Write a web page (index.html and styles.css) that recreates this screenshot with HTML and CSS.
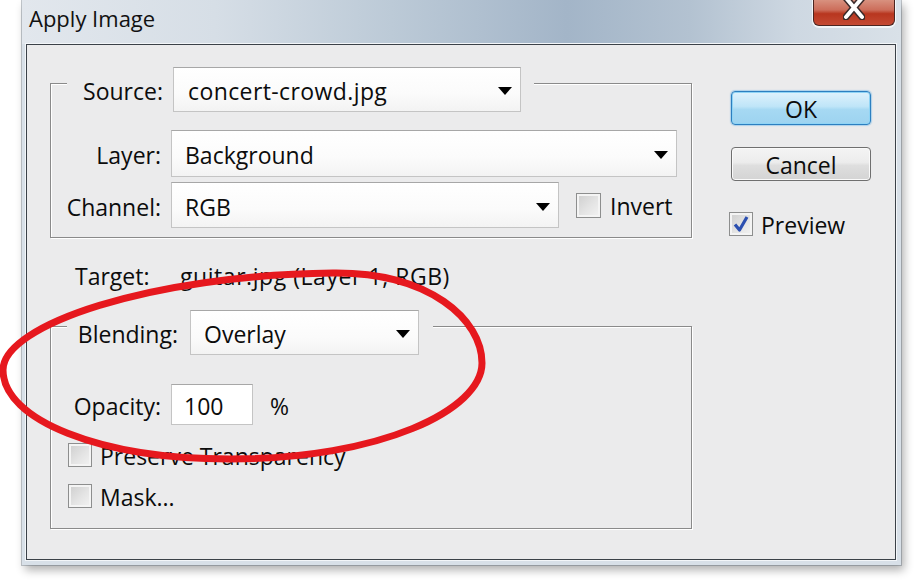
FILE: index.html
```html
<!DOCTYPE html>
<html>
<head>
<meta charset="utf-8">
<title>Apply Image</title>
<link rel="stylesheet" href="styles.css">
</head>
<body>
<div class="window">
  <div class="titlebar">
    <span class="title">Apply Image</span>
    <div class="close">
      <svg class="close-x" width="22" height="20" viewBox="0 0 22 20">
        <path d="M3 -2 L19 17 M19 -2 L3 17" stroke="#3a2a2a" stroke-width="7" stroke-linecap="round" fill="none"/>
        <path d="M3 -2 L19 17 M19 -2 L3 17" stroke="#ffffff" stroke-width="4" stroke-linecap="round" fill="none"/>
      </svg>
    </div>
  </div>
  <div class="client">
    <div class="main">
      <div class="group group-source">
        <div class="group-head">
          <span class="label head-label-source">Source:</span>
          <div class="select select-source"><span class="select-text">concert-crowd.jpg</span><span class="arrow"></span></div>
        </div>
        <div class="row row-layer">
          <span class="label">Layer:</span>
          <div class="select select-layer"><span class="select-text">Background</span><span class="arrow"></span></div>
        </div>
        <div class="row row-channel">
          <span class="label">Channel:</span>
          <div class="select select-channel"><span class="select-text">RGB</span><span class="arrow"></span></div>
          <div class="check check-invert"><span class="box"></span><span class="check-text">Invert</span></div>
        </div>
      </div>
      <div class="target">
        <span class="target-label">Target:</span><span class="target-value">guitar.jpg (Layer 1, RGB)</span>
      </div>
      <div class="group group-blend">
        <div class="group-head">
          <span class="label head-label-blend">Blending:</span>
          <div class="select select-blend"><span class="select-text">Overlay</span><span class="arrow"></span></div>
        </div>
        <div class="row row-opacity">
          <span class="label">Opacity:</span>
          <div class="input"><span class="select-text">100</span></div>
          <span class="pct">%</span>
        </div>
        <div class="checks">
          <div class="check"><span class="box"></span><span class="check-text">Preserve Transparency</span></div>
          <div class="check"><span class="box"></span><span class="check-text">Mask...</span></div>
        </div>
      </div>
    </div>
    <div class="side">
      <div class="btn btn-ok">OK</div>
      <div class="btn btn-cancel">Cancel</div>
      <div class="check check-preview">
        <span class="box">
          <svg class="tick" width="22" height="22" viewBox="0 0 22 22">
            <path d="M5 11.5 L9.5 17 L17 4" stroke="#2b4fb0" stroke-width="3.2" fill="none" stroke-linejoin="round"/>
          </svg>
        </span>
        <span class="check-text">Preview</span>
      </div>
    </div>
  </div>
</div>
<svg class="annotation" width="914" height="580" viewBox="0 0 914 580">
  <path d="M3 370 C3 325 150 275 333 273 C430 272 482 320 482 363 C482 410 380 459 230 459 C100 459 3 420 3 370 Z" fill="none" stroke="#e6181e" stroke-width="7"/>
</svg>
</body>
</html>
```

FILE: styles.css
```css
html, body {
  margin: 0;
  padding: 0;
}

body {
  width: 914px;
  height: 580px;
  overflow: hidden;
  position: relative;
  background: #ffffff;
  font-family: "Open Sans", "Noto Sans", sans-serif;
  font-size: 23px;
  color: #0c0c0c;
}

.window {
  margin-left: 22px;
  width: 879px;
  height: 565px;
  background: #d8e0e8;
  box-shadow: 0 0 0 1px rgba(80, 95, 110, 0.35), 3px 5px 9px rgba(0, 0, 0, 0.32);
  display: flex;
  flex-direction: column;
}

.titlebar {
  height: 44px;
  flex: none;
  display: flex;
  align-items: flex-start;
  padding-left: 7px;
  background: linear-gradient(to right, #e2e7ed 0%, #d6dee6 22%, #bccad7 42%, #a3b5c8 62%, #b3c2d1 76%, #ced8e2 88%, #d9e1e8 100%);
}

.title {
  font-size: 22px;
  line-height: 30px;
  padding-top: 3px;
  color: #111;
}

.close {
  margin-left: auto;
  margin-right: 6px;
  width: 82px;
  height: 26px;
  box-sizing: border-box;
  border: 1px solid #4b2520;
  border-top: none;
  border-radius: 0 0 6px 6px;
  background: linear-gradient(#d8917f 0%, #cc6d5a 40%, #b8361f 55%, #c44a33 100%);
  box-shadow: 0 1px 0 1px rgba(255, 255, 255, 0.7);
  display: flex;
  justify-content: center;
  align-items: flex-start;
}

.close-x {
  display: block;
}

.client {
  margin: 0 5px 0 4px;
  height: 516px;
  box-sizing: border-box;
  border: 1px solid #3b4148;
  background: #ebebec;
  box-shadow: 0 0 0 1px #f3f6f9;
  display: flex;
  align-items: flex-start;
}

.main {
  margin-left: 23px;
  padding-top: 38px;
  width: 642px;
}

.group {
  border: 1px solid #8a8a8a;
  box-shadow: 1px 1px 0 #ffffff, inset 1px 1px 0 #ffffff;
}

.group-head {
  display: flex;
  align-items: center;
  width: fit-content;
  margin: -17px 0 0 16px;
  background: #ebebec;
  height: 45px;
}

.group-source .group-head {
  padding-right: 13px;
}

.group-blend .group-head {
  padding-right: 14px;
}

.label {
  text-align: right;
  line-height: 30px;
  padding-top: 3px;
  white-space: nowrap;
}

.head-label-source {
  width: 96px;
  margin-right: 10px;
}

.head-label-blend {
  width: 111px;
  margin-right: 12px;
}

.row .label {
  width: 110px;
  margin-right: 10px;
}

.select,
.input {
  box-sizing: border-box;
  background: linear-gradient(#ffffff 0%, #fbfbfb 60%, #f3f3f3 100%);
  border: 1px solid #c4c4c4;
  border-top-color: #a7a7a7;
  display: flex;
  align-items: center;
  white-space: nowrap;
}

.select-text {
  line-height: 30px;
  padding-top: 3px;
}

.arrow {
  margin-left: auto;
  width: 0;
  height: 0;
  border-left: 7px solid transparent;
  border-right: 7px solid transparent;
  border-top: 8px solid #000;
  margin-right: 8px;
  margin-top: 3px;
}

.select-source {
  width: 348px;
  height: 45px;
  padding-left: 14px;
}

.select-source .select-text {
  letter-spacing: 0.4px;
}

.select-layer {
  width: 506px;
  height: 47px;
  padding-left: 13px;
}

.select-channel {
  width: 388px;
  height: 46px;
  padding-left: 13px;
}

.select-blend {
  width: 229px;
  height: 45px;
  padding-left: 13px;
}

.input {
  width: 82px;
  height: 41px;
  padding-left: 12px;
  background: #ffffff;
}

.row {
  display: flex;
  align-items: center;
}

.row-layer {
  margin-top: 18px;
}

.row-channel {
  margin-top: 5px;
  margin-bottom: 9px;
}

.check {
  display: flex;
  align-items: center;
  height: 24px;
  white-space: nowrap;
}

.check-text {
  line-height: 24px;
  padding-top: 1px;
}

.box {
  width: 24px;
  height: 24px;
  box-sizing: border-box;
  border: 1px solid #8d8e8e;
  background: linear-gradient(135deg, #cdcdcd 0%, #e4e4e4 55%, #f3f3f3 100%);
  box-shadow: inset 0 0 0 2px #f4f4f4;
  margin-right: 8px;
  flex: none;
  display: flex;
  align-items: center;
  justify-content: center;
}

.check-invert {
  margin-left: 17px;
  height: 25px;
}

.check-invert .box {
  width: 25px;
  height: 25px;
  margin-right: 9px;
}

.target {
  margin-top: 23px;
  margin-left: 25px;
  display: flex;
  line-height: 30px;
  white-space: nowrap;
}

.target-label {
  width: 105px;
}

.target-value {
  letter-spacing: 0.55px;
}

.group-blend {
  margin-top: 35px;
}

.row-opacity {
  margin-top: 29px;
}

.pct {
  margin-left: 17px;
  line-height: 30px;
  padding-top: 3px;
}

.checks {
  margin: 18px 0 0 17px;
  padding-bottom: 20px;
  display: flex;
  flex-direction: column;
  gap: 17px;
}

.side {
  margin-left: 37px;
  padding-top: 46px;
  display: flex;
  flex-direction: column;
  align-items: flex-start;
}

.btn {
  margin-left: 2px;
  width: 140px;
  height: 34px;
  box-sizing: border-box;
  border-radius: 4px;
  display: flex;
  align-items: center;
  justify-content: center;
  line-height: 30px;
  padding-top: 2px;
}

.btn-ok {
  border: 1px solid #2c7fc0;
  background: linear-gradient(#dff2fc 0%, #bfe5f8 45%, #a6d9f3 55%, #9dd3f0 100%);
  box-shadow: inset 0 0 0 1px #8fd4f5, 0 0 1px 1px rgba(80, 170, 230, 0.4);
}

.btn-cancel {
  margin-top: 22px;
  border: 1px solid #6f6f6f;
  background: linear-gradient(#f4f4f4 0%, #ececec 45%, #dedede 55%, #d4d4d4 100%);
  box-shadow: inset 0 0 0 1px #fafafa;
}

.check-preview {
  margin-top: 31px;
}

.tick {
  display: block;
}

.annotation {
  position: absolute;
  left: 0;
  top: 0;
  pointer-events: none;
}
```
